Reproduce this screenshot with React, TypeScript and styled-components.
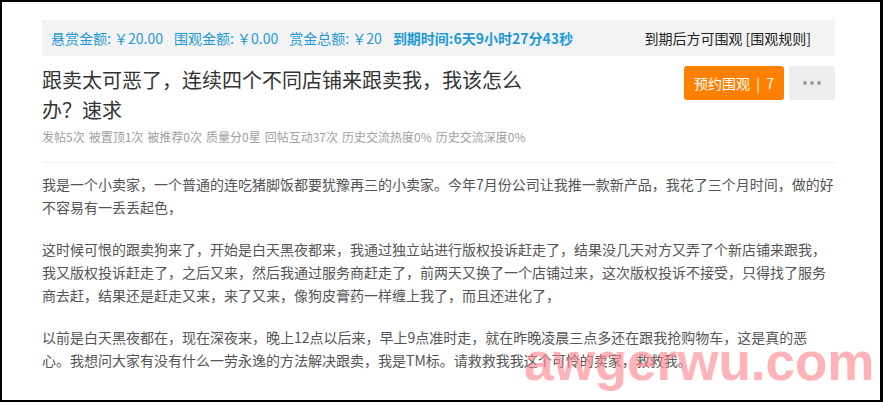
import React from "react";
import styled, { createGlobalStyle } from "styled-components";

/* global */
const GlobalStyle = createGlobalStyle`
  html, body {
    margin: 0;
    padding: 0;
    background: #000;
  }
  * {
    box-sizing: border-box;
  }
`;

/* data */
const bounty = [
  { label: "悬赏金额:", value: "￥20.00" },
  { label: "围观金额:", value: "￥0.00" },
  { label: "赏金总额:", value: "￥20" },
];

const stats = [
  "发帖5次",
  "被置顶1次",
  "被推荐0次",
  "质量分0星",
  "回帖互动37次",
  "历史交流热度0%",
  "历史交流深度0%",
];

const paragraphs = [
  "我是一个小卖家，一个普通的连吃猪脚饭都要犹豫再三的小卖家。今年7月份公司让我推一款新产品，我花了三个月时间，做的好不容易有一丢丢起色，",
  "这时候可恨的跟卖狗来了，开始是白天黑夜都来，我通过独立站进行版权投诉赶走了，结果没几天对方又弄了个新店铺来跟我，我又版权投诉赶走了，之后又来，然后我通过服务商赶走了，前两天又换了一个店铺过来，这次版权投诉不接受，只得找了服务商去赶，结果还是赶走又来，来了又来，像狗皮膏药一样缠上我了，而且还进化了，",
  "以前是白天黑夜都在，现在深夜来，晚上12点以后来，早上9点准时走，就在昨晚凌晨三点多还在跟我抢购物车，这是真的恶心。我想问大家有没有什么一劳永逸的方法解决跟卖，我是TM标。请救救我我这个可怜的卖家，救救我。",
];

/* DOM */
const App: React.FC = (): JSX.Element => {
  return (
    <>
      <GlobalStyle />
      <Frame>
        <BountyBar>
          <BountyInfo>
            {bounty.map((b) => (
              <BountyItem key={b.label}>
                {b.label} {b.value}
              </BountyItem>
            ))}
            <BountyItem bold>到期时间:6天9小时27分43秒</BountyItem>
          </BountyInfo>
          <BountyNote>到期后方可围观 [围观规则]</BountyNote>
        </BountyBar>

        <Header>
          <div>
            <Title>跟卖太可恶了，连续四个不同店铺来跟卖我，我该怎么办？速求</Title>
            <Meta>
              {stats.map((s) => (
                <span key={s}>{s}</span>
              ))}
            </Meta>
          </div>
          <Actions>
            <WatchButton>预约围观 <Sep>|</Sep> 7</WatchButton>
            <MoreButton aria-label="更多">
              <Dot />
              <Dot />
              <Dot />
            </MoreButton>
          </Actions>
        </Header>

        <Content>
          {paragraphs.map((p, i) => (
            <Paragraph key={i}>{p}</Paragraph>
          ))}
        </Content>

        <Watermark>awgerwu.com</Watermark>
      </Frame>
    </>
  );
};

/* styled */
const Frame = styled.div`
  position: relative;
  width: 883px;
  height: 402px;
  overflow: hidden;
  background: #fff;
  border-style: solid;
  border-color: #000;
  border-width: 2px 3px 2px 2px;
  padding: 18px 45px 0 40px;
  font-family: "Noto Sans CJK SC", "Noto Sans", sans-serif;
`;

const BountyBar = styled.div`
  display: flex;
  align-items: center;
  justify-content: space-between;
  height: 36px;
  padding: 0 24px 0 9px;
  background: #f3f3f3;
  font-size: 14px;
`;

const BountyInfo = styled.div`
  display: flex;
  gap: 11px;
`;

const BountyItem = styled.span<{ bold?: boolean }>`
  color: #1e9ad6;
  font-weight: ${(p) => (p.bold ? 700 : 400)};
`;

const BountyNote = styled.span`
  color: #222;
`;

const Header = styled.div`
  display: flex;
  justify-content: space-between;
  align-items: flex-start;
  padding: 9px 0 15px;
  border-bottom: 1px solid #eeeeee;
`;

const Title = styled.h1`
  margin: 0;
  width: 490px;
  font-size: 20px;
  font-weight: 400;
  line-height: 30px;
  color: #333;
`;

const Meta = styled.div`
  display: flex;
  gap: 4px;
  margin-top: 2px;
  font-size: 12px;
  line-height: 20px;
  color: #a0a0a0;
`;

const Actions = styled.div`
  display: flex;
  gap: 5px;
  margin-top: 1px;
`;

const WatchButton = styled.button`
  width: 100px;
  height: 34px;
  border: none;
  border-radius: 3px;
  background: #ff8000;
  color: #fff;
  font-family: inherit;
  font-size: 14px;
  padding: 0;
`;

const Sep = styled.span`
  margin: 0 3px;
`;

const MoreButton = styled.button`
  display: flex;
  align-items: center;
  justify-content: center;
  gap: 3px;
  width: 46px;
  height: 34px;
  border: none;
  border-radius: 3px;
  background: #eeeeee;
  padding: 0;
`;

const Dot = styled.i`
  width: 4px;
  height: 4px;
  border-radius: 50%;
  background: #a0a0a0;
`;

const Content = styled.div`
  padding-top: 10px;
`;

const Paragraph = styled.p`
  margin: 0 0 19px;
  font-size: 14px;
  line-height: 23px;
  color: #555;
`;

const Watermark = styled.div`
  position: absolute;
  left: 522px;
  top: 330px;
  font-family: "Liberation Sans", Arial, sans-serif;
  font-weight: 700;
  font-size: 53px;
  line-height: 60px;
  color: rgba(255, 130, 140, 0.62);
  pointer-events: none;
  white-space: nowrap;
`;

export default App;
